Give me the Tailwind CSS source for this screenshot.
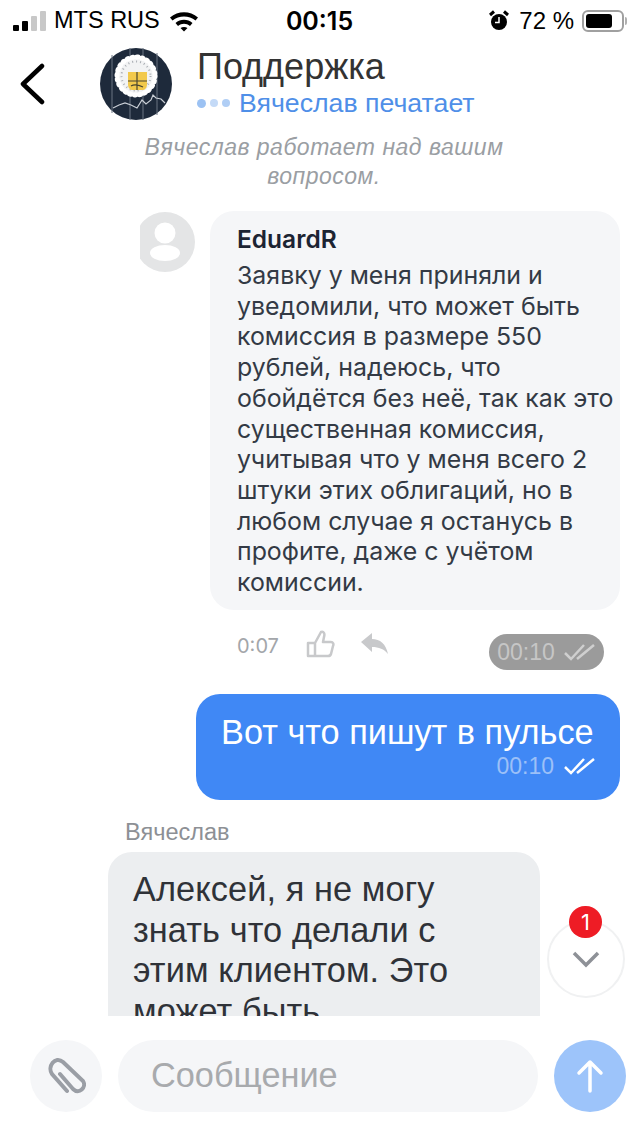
<!DOCTYPE html>
<html lang="ru">
<head>
    <meta charset="UTF-8">
    <meta name="viewport" content="width=device-width, initial-scale=1.0">
    <title>Поддержка</title>
    <script src="https://cdn.jsdelivr.net/npm/@tailwindcss/browser@4"></script>
</head>
<body class="bg-white font-['Inter',sans-serif]">
    <div class="w-[640px] h-[1136px] flex flex-col overflow-hidden bg-white">

        <!-- status bar -->
        <div class="h-10 shrink-0 flex items-center justify-between pl-[13px] pr-[13px] pt-[2px] text-black text-[23.500px] leading-none">
            <div class="flex items-center w-[240px]">
                <div class="flex items-end gap-[3px] h-5">
                    <div class="w-[6px] h-[6px] rounded-[1px] bg-black"></div>
                    <div class="w-[6px] h-[10px] rounded-[1px] bg-black"></div>
                    <div class="w-[6px] h-[15px] rounded-[1px] bg-[#c8c8c8]"></div>
                    <div class="w-[6px] h-5 rounded-[1px] bg-[#c8c8c8]"></div>
                </div>
                <span class="ml-2 font-['Liberation_Sans',sans-serif]">MTS RUS</span>
                <svg class="ml-[9px]" width="30" height="22" viewBox="0 0 30 22"><path d="M1 7.500C9 .5 21 .5 29 7.500L26.500 10.500C20 5 10 5 3.500 10.500Z M6.500 13C11.500 8.800 18.500 8.800 23.500 13L21 16C17.200 13 12.800 13 9 16Z M11.500 18C13.500 16.500 16.500 16.500 18.500 18L15 21.500Z" fill="#000"/></svg>
            </div>
            <span class="font-semibold text-[25px] -ml-[1px]">00:15</span>
            <div class="flex items-center justify-end w-[240px]">
                <svg width="20" height="22" viewBox="0 0 20 22"><circle cx="10" cy="12" r="8" fill="#000"/><path d="M10 7v5.500H6" stroke="#fff" stroke-width="1.500" fill="none"/><path d="M1 5 5 1.500M19 5 15 1.500" stroke="#000" stroke-width="3"/></svg>
                <span class="ml-[10px] text-[24px] font-['Liberation_Sans',sans-serif]">72 %</span>
                <div class="ml-2 w-[42px] h-[22px] rounded-[6px] border-2 border-[#a0a0a0] p-[2px]">
                    <div class="w-[26px] h-full rounded-[3px] bg-black"></div>
                </div>
                <div class="w-[2px] h-2 ml-[1px] rounded-r bg-[#b0b0b0]"></div>
            </div>
        </div>

        <!-- header -->
        <div class="h-[88px] shrink-0 flex items-center">
            <svg class="ml-[18px]" width="28" height="42" viewBox="0 0 28 42"><path d="M24 3 5 21l19 18" stroke="#000" stroke-width="4.500" stroke-linecap="round" stroke-linejoin="round" fill="none"/></svg>
            <svg class="ml-[54px]" width="72" height="72" viewBox="0 0 72 72">
                <circle cx="36" cy="36" r="36" fill="#1e2a3b"/>
                <path d="M12 7v58M30 0v72M43 0v72M57 5v62" stroke="#6b7583" stroke-width="1"/>
                <circle cx="36" cy="28" r="18" fill="#f2f3f4"/>
                <circle cx="36" cy="28" r="19" fill="none" stroke="#fff" stroke-width="5" stroke-dasharray="1 4" stroke-linecap="round"/>
                <circle cx="36" cy="28" r="14.500" fill="none" stroke="#a9adb3" stroke-width="2" stroke-dasharray="1 3"/>
                <path d="M28 24h19v12c0 4-2 6-5 6H33c-3 0-5-2-5-6Z" fill="#f2c94c"/>
                <path d="M37 24v18M28 33h19M31 38c3-2 8-1 12 1" stroke="#4a4630" stroke-width="1.200" fill="none"/>
                <path d="M13 60l6-3 6-2 6 2 6 3 5-8 4 4 5-4 2-5 3 3 5 1 4 4" stroke="#c9ced5" stroke-width="1.200" fill="none"/>
            </svg>
            <div class="ml-[25px] flex flex-col -mt-[4px]">
                <div class="text-[36px] leading-10 text-[#333] font-['Liberation_Sans',sans-serif]">Поддержка</div>
                <div class="flex items-center h-7 mt-[2px]">
                    <span class="w-[9px] h-[9px] rounded-full bg-[#9cc2f3]"></span>
                    <span class="ml-[4px] w-[8px] h-[8px] rounded-full bg-[#c4daf7]"></span>
                    <span class="ml-[4px] w-[8px] h-[8px] rounded-full bg-[#b0cef5]"></span>
                    <span class="ml-[9px] text-[26.700px] text-[#4f8fe8] font-['Liberation_Sans',sans-serif]">Вячеслав печатает</span>
                </div>
            </div>
        </div>

        <!-- messages -->
        <div class="relative h-[888px] shrink-0 overflow-hidden">
            <p class="ml-[124px] pt-[5px] w-[400px] text-center text-[23px] leading-[29px] italic tracking-[.5px] text-[#9a9ea3] font-['Liberation_Sans',sans-serif]">Вячеслав работает над вашим<br>вопросом.</p>

            <div class="mt-5 flex items-start pl-[140px]">
                <div class="w-[55px] h-[60px] mt-[1px] overflow-hidden">
                    <div class="w-[60px] h-[60px] -ml-[5px] rounded-full bg-[#e4e5e6] flex items-center justify-center">
                        <svg width="36" height="42" viewBox="0 0 36 42"><circle cx="18" cy="12" r="10.500" fill="#fff"/><ellipse cx="18" cy="32" rx="15" ry="8" fill="#fff"/></svg>
                    </div>
                </div>
                <div class="ml-[15px] w-[410px] h-[399px] rounded-3xl bg-[#f5f6f8] pl-[27px] pt-[14px]">
                    <div class="text-[24.500px] leading-7 font-semibold text-[#1c2433]">EduardR</div>
                    <div class="mt-[7px] text-[24.900px] leading-[30.700px] text-[#333a45] whitespace-nowrap">
                        Заявку у меня приняли и<br>
                        уведомили, что может быть<br>
                        комиссия в размере 550<br>
                        рублей, надеюсь, что<br>
                        обойдётся без неё, так как это<br>
                        существенная комиссия,<br>
                        учитывая что у меня всего 2<br>
                        штуки этих облигаций, но в<br>
                        любом случае я останусь в<br>
                        профите, даже с учётом<br>
                        комиссии.
                    </div>
                </div>
            </div>

            <div class="mt-6 flex items-start pl-[237px] pr-9 h-[36px]">
                <span class="text-[20px] leading-[24px] text-[#a3a6aa]">0:07</span>
                <svg class="ml-[27px] -mt-[4px]" width="30" height="28" viewBox="0 0 30 28"><path d="M2 13h7v13H2Z M9 13l6-11c3-1 4 2 3 5l-1 5h8c2 0 3 2 2 4l-2 8c-.5 1.500-1.500 2-3 2H9" stroke="#c8c9cb" stroke-width="2.500" fill="none" stroke-linejoin="round"/></svg>
                <svg class="ml-[24px] -mt-[2px]" width="30" height="24" viewBox="0 0 30 24"><path d="M1 10 12 1v6c8 0 14 5 16 15-4-5-9-7-16-7v5Z" fill="#c8c9cb"/></svg>
                <div class="ml-auto w-[115px] h-9 rounded-full bg-[#9b9b9b] flex items-center justify-center gap-[9px] text-[23px] text-[#c6c6c6] font-['Liberation_Sans',sans-serif]">
                    00:10
                    <svg width="32" height="18" viewBox="0 0 32 18"><path d="M1 10l6 6L20 2M13 16 30 2" stroke="#cfcfcf" stroke-width="2.500" fill="none"/></svg>
                </div>
            </div>

            <div class="mt-6 flex justify-end pr-5">
                <div class="w-[424px] h-[106px] rounded-3xl bg-[#4088f5] pt-5 pl-[25px] pr-6">
                    <div class="text-[34.300px] leading-9 text-white whitespace-nowrap font-['Liberation_Sans',sans-serif]">Вот что пишут в пульсе</div>
                    <div class="mt-[2px] flex items-center justify-end gap-[10px] text-[23px] leading-7 text-[#9cc0f8] font-['Liberation_Sans',sans-serif]">
                        00:10
                        <svg width="32" height="18" viewBox="0 0 32 18"><path d="M1 10l6 6L20 2M13 16 30 2" stroke="#fff" stroke-width="2.500" fill="none"/></svg>
                    </div>
                </div>
            </div>

            <div class="mt-5 pl-[125px] text-[23.500px] leading-6 text-[#8d9095] font-['Liberation_Sans',sans-serif]">Вячеслав</div>
            <div class="mt-2 ml-[108px] w-[432px] h-[200px] rounded-t-3xl bg-[#eceef0] pl-[25px] pt-[17px] text-[34.300px] tracking-[.1px] leading-[40.500px] text-[#2f3238] font-['Liberation_Sans',sans-serif]">
                Алексей, я не могу<br>
                знать что делали с<br>
                этим клиентом. Это<br>
                может быть
            </div>

            <!-- scroll to bottom -->
            <div class="absolute left-[547px] top-[792px] w-[78px] h-[78px] rounded-full bg-white border-2 border-[#f0f1f2] flex items-center justify-center">
                <svg width="30" height="18" viewBox="0 0 30 18"><path d="M3 3l12 12L27 3" stroke="#8e9197" stroke-width="3.500" fill="none"/></svg>
            </div>
            <div class="absolute left-[569px] top-[778px] w-[33px] h-[32px] rounded-full bg-[#ee1c25] flex items-center justify-center text-[22px] text-white">1</div>
        </div>

        <!-- input -->
        <div class="flex-1 flex items-start pt-6 pl-[30px]">
            <div class="w-[72px] h-[72px] rounded-full bg-[#f5f6f8] flex items-center justify-center">
                <svg width="40" height="44" viewBox="0 0 40 44"><path d="M21 37 6 20C1 13 9 1 17 8L37 27C41 33 33 41 27 35L14 20" stroke="#9a9ea5" stroke-width="4" fill="none" stroke-linecap="round"/></svg>
            </div>
            <div class="ml-4 w-[420px] h-[72px] rounded-full bg-[#f5f6f8] pl-[33px] flex items-center text-[34.300px] text-[#a8aaad] font-['Liberation_Sans',sans-serif]">Сообщение</div>
            <div class="ml-4 w-[72px] h-[72px] rounded-full bg-[#9dc4fa] flex items-center justify-center">
                <svg width="28" height="34" viewBox="0 0 28 34"><path d="M14 32V3M3 14 14 3l11 11" stroke="#fff" stroke-width="3.500" fill="none" stroke-linecap="round" stroke-linejoin="round"/></svg>
            </div>
        </div>
    </div>
</body>
</html>
